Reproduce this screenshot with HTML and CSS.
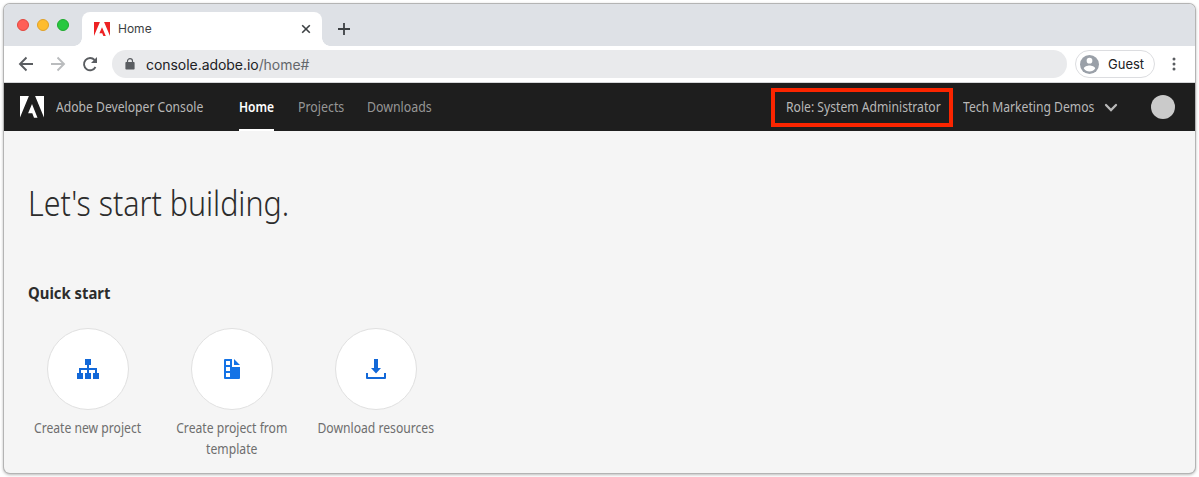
FILE: index.html
```html
<!DOCTYPE html>
<html lang="en">
<head>
<meta charset="utf-8">
<title>Home</title>
<link rel="stylesheet" href="styles.css">
</head>
<body>
<div class="window">
  <div class="tabstrip">
    <div class="lights"><i class="light red"></i><i class="light yellow"></i><i class="light green"></i></div>
    <div class="tab">
      <svg class="favicon" width="16" height="14" viewBox="0 0 24 21"><path fill="#ed2224" d="M0 0h8.9L0 21zM15.1 0H24v21zM12 7.7 17.700 21H14l-1.700-4.200H8.100z"/></svg>
      <span class="tab-title">Home</span>
      <svg width="10" height="10" viewBox="0 0 10 10"><path d="M1.200 1.200 8.800 8.800M8.800 1.200 1.200 8.800" stroke="#3c4043" stroke-width="1.600"/></svg>
    </div>
    <svg class="plus" width="12" height="12" viewBox="0 0 12 12"><path d="M6 0v12M0 6h12" stroke="#3c4043" stroke-width="1.800"/></svg>
  </div>
  <div class="toolbar">
    <svg class="nav-icon" width="16" height="16" viewBox="0 0 16 16"><path d="M15 8H2.500M8.500 1.500 2 8l6.500 6.500" fill="none" stroke="#5a5d61" stroke-width="1.900"/></svg>
    <svg class="nav-icon" width="16" height="16" viewBox="0 0 16 16"><path d="M1 8h12.500M7.500 1.500 14 8l-6.500 6.500" fill="none" stroke="#babcbe" stroke-width="1.900"/></svg>
    <svg class="nav-icon" width="16" height="16" viewBox="0 0 16 16"><path d="M13.500 11A6.100 6.100 0 1 1 12.600 4" fill="none" stroke="#5a5d61" stroke-width="1.900"/><path fill="#5a5d61" d="M15 1v6H9z"/></svg>
    <div class="omnibox">
      <svg width="10" height="12" viewBox="0 0 10 12"><path fill="#5a5d61" d="M1.200 4H8.800q.8 0 .8.800v6q0 .8-.8.800H1.200q-.8 0-.8-.8v-6q0-.8.800-.8z"/><path d="M2.500 4.500V3.100a2.500 2.500 0 0 1 5 0v1.400" fill="none" stroke="#5a5d61" stroke-width="1.200"/></svg>
      <span class="url">console.adobe.io<span class="path">/home#</span></span>
    </div>
    <div class="guest">
      <svg width="19" height="19" viewBox="0 0 20 20"><circle cx="10" cy="10" r="10" fill="#9aa0a8"/><circle cx="10" cy="6" r="3" fill="#fff"/><path fill="#fff" d="M4 14.200C4 12.200 8 11.100 10 11.100s6 1.100 6 3.100c-1.300 2-3.500 3.200-6 3.200s-4.700-1.200-6-3.200z"/></svg>
      <span>Guest</span>
    </div>
    <svg class="dots" width="4" height="14" viewBox="0 0 4 14"><g fill="#5a5d61"><circle cx="2" cy="2" r="1.500"/><circle cx="2" cy="7" r="1.500"/><circle cx="2" cy="12" r="1.500"/></g></svg>
  </div>
  <header class="appbar">
    <svg class="logo" width="24" height="22" viewBox="0 0 24 22"><path fill="#fff" d="M0 0h8.900L0 21.500zM15.100 0H24v21.500zM12 8 17.500 21.700H14l-1.700-4.400H8.100z"/></svg>
    <div class="brand"><span class="label">Adobe Developer Console</span></div>
    <nav class="nav">
      <a class="home active"><span class="label">Home</span></a>
      <a class="projects"><span class="label">Projects</span></a>
      <a class="downloads"><span class="label">Downloads</span></a>
    </nav>
    <div class="role"><span class="label">Role: System Administrator</span></div>
    <div class="org"><span class="label">Tech Marketing Demos</span></div>
    <svg class="chevron" width="14" height="9" viewBox="0 0 14 9"><path d="M2 2l5 5 5-5" fill="none" stroke="#b8b8b8" stroke-width="2.300" stroke-linecap="round"/></svg>
    <i class="avatar"></i>
  </header>
  <main class="content">
    <h1>Let's start building.</h1>
    <h2>Quick start</h2>
    <div class="cards">
      <div class="card">
        <div class="disc"><svg width="22" height="20" viewBox="0 0 22 20"><path fill="#1268d8" d="M8 0h6v6h-2v3h8v5h2v6h-6v-6h2v-3h-6v3h2v6H8v-6h2v-3H4v3h2v6H0v-6h2V9h8V6H8z"/></svg></div>
        <p>Create new project</p>
      </div>
      <div class="card">
        <div class="disc"><svg width="16" height="20" viewBox="0 0 16 20"><path fill="#1473e6" fill-rule="evenodd" d="M1 0h7v8h8v11q0 1-1 1H1q-1 0-1-1V1q0-1 1-1zM2 2v4h4V2zM2 8v4h4V8zM2 14v4h4v-4zM10 0l6 6h-6z"/></svg></div>
        <p>Create project from<br>template</p>
      </div>
      <div class="card">
        <div class="disc"><svg width="20" height="20" viewBox="0 0 20 20"><path fill="#1268d8" d="M8 0h4v9h3l-5 5.500L5 9h3zM0 14h2v4h16v-4h2v5q0 1-1 1H1q-1 0-1-1z"/></svg></div>
        <p>Download resources</p>
      </div>
    </div>
  </main>
</div>
</body>
</html>
```
FILE: styles.css
```css
* { box-sizing: border-box; }
body { margin: 0; padding: 4px; width: 1199px; height: 477px; overflow: hidden; background: #fff; font-family: "Noto Sans", sans-serif; }
svg { display: block; flex: none; }
.window { width: 1191px; height: 469px; border-radius: 6px; overflow: hidden; background: #f5f5f5; box-shadow: 0 0 0 1px #b4b4b4, 0 1px 3px 1px #bbb; }
.tabstrip { height: 42px; background: #dee1e6; display: flex; align-items: flex-end; }
.lights { display: flex; gap: 8px; padding: 0 0 15px 13px; width: 78px; }
.light { width: 12px; height: 12px; border-radius: 50%; border: 1px solid; }
.red { background: #ff5f57; border-color: #e2463f; }
.yellow { background: #febc2e; border-color: #e0a128; }
.green { background: #28c840; border-color: #1eaa2e; }
.tab { position: relative; width: 240px; height: 34px; background: #fff; border-radius: 8px 8px 0 0; display: flex; align-items: center; padding: 0 11px 0 12px; font: 13px Inter, sans-serif; color: #3c4043; }
.tab::before, .tab::after { content: ""; position: absolute; bottom: 0; width: 8px; height: 8px; }
.tab::before { left: -8px; background: radial-gradient(circle at 0 0, #dee1e6 7.500px, #fff 8px); }
.tab::after { right: -8px; background: radial-gradient(circle at 100% 0, #dee1e6 7.500px, #fff 8px); }
.favicon { margin-top: -1px; }
.tab-title { margin: -1px auto 0 8px; font-size: 12px; }
.plus { margin: 0 0 11px 16px; }
.toolbar { height: 37px; background: #fff; border-bottom: 1px solid #d5d6d8; display: flex; align-items: center; padding-left: 14px; font-family: Inter, sans-serif; }
.nav-icon { margin-right: 16px; }
.omnibox { width: 955px; height: 28px; margin-left: -2px; border-radius: 14px; background: #e9eaec; display: flex; align-items: center; padding-left: 13px; gap: 11px; }
.url { font-size: 14px; letter-spacing: -0.050px; color: #202124; }
.path { color: #64676b; }
.guest { margin-left: 8px; width: 80px; height: 28px; border: 1px solid #dcdde0; border-radius: 14px; display: flex; align-items: center; gap: 9px; padding-left: 4px; font-size: 13px; color: #202124; }
.dots { margin-left: 17px; }
.appbar { height: 48px; background: #1e1e1e; display: flex; align-items: center; padding-left: 16px; color: #b8b8b8; }
.label { display: block; width: max-content; font-size: 13.500px; line-height: 18px; white-space: nowrap; transform: scaleX(.9); transform-origin: 0 50%; }
.brand { width: 148px; margin-left: 12px; }
.nav { height: 48px; margin-left: 35px; display: flex; gap: 24px; color: #969696; }
.nav a { height: 48px; padding-top: 15px; }
.home { width: 35px; }
.home .label { transform: scaleX(.89); }
.projects { width: 45px; }
.downloads { width: 65px; }
.projects .label, .downloads .label { transform: scaleX(.915); }
.active { color: #fff; font-weight: 600; border-bottom: 2px solid #fff; }
.role { margin-left: auto; width: 182px; height: 39px; border: 4px solid #fb2500; padding-left: 11px; display: flex; align-items: center; }
.org { width: 131px; margin-left: 10px; }
.chevron { margin-left: 10px; }
.avatar { width: 24px; height: 24px; margin: 0 20px 0 33px; border-radius: 50%; background: #cacaca; }
.content { padding: 48px 24px 0; color: #2c2c2c; }
h1 { margin: 0; font-size: 35px; font-weight: 300; line-height: 48px; white-space: nowrap; width: max-content; transform: scaleX(.868); transform-origin: 0 50%; }
h2 { margin: 55px 0 0; font-size: 16.500px; line-height: 22px; font-weight: 700; width: max-content; transform: scaleX(.9); transform-origin: 0 50%; }
.cards { display: flex; gap: 24px; margin-top: 24px; }
.card { width: 120px; display: flex; flex-direction: column; align-items: center; }
.disc { width: 82px; height: 82px; border: 1px solid #e0e0e0; border-radius: 50%; background: #fff; display: flex; align-items: center; justify-content: center; }
.card p { margin: 8px 0 0; font-size: 13.500px; line-height: 21px; white-space: nowrap; text-align: center; color: #6e6e6e; transform: scaleX(.9); }
```
